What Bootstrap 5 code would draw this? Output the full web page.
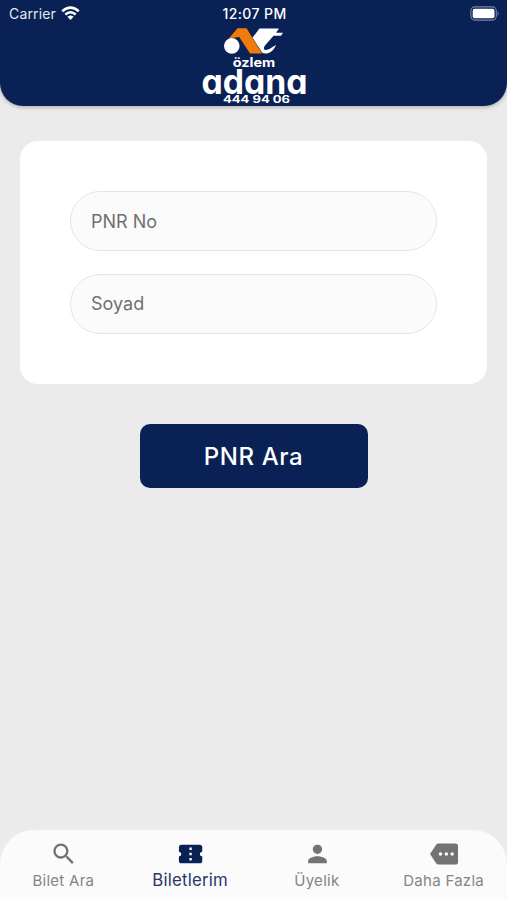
<!DOCTYPE html>
<html lang="tr">
<head>
<meta charset="utf-8">
<meta name="viewport" content="width=device-width, initial-scale=1">
<title>Biletlerim</title>
<link href="https://cdn.jsdelivr.net/npm/bootstrap@5.3.0/dist/css/bootstrap.min.css" rel="stylesheet">
<style>
body{font-family:Inter,"Liberation Sans",sans-serif;background:#ebebeb;overflow:hidden}
.app-head{height:106px;background:#092154;border-radius:0 0 23px 23px;box-shadow:0 1px 4px rgba(0,0,0,.3)}
.status-row{height:27px;padding:0 7px 0 9px;font-size:14px;line-height:27px}
.status-row>div{flex:1 1 0}
.carrier{letter-spacing:.15px;color:#e4e8f0}
.clock{font-size:14px;font-weight:500;letter-spacing:.4px}
.brand text{font-family:Inter,sans-serif;font-weight:700;font-feature-settings:"cv11";fill:#fff}
.search-panel{margin:34.5px 20px 0;padding:50.5px 50px 50px;border-radius:18px;height:243px}
.field{height:60px;padding:0 20px;font-size:18px;background:#fbfbfb;border:1px solid #e5e5e5}
.field::placeholder{color:#707070}
.field+.field{margin-top:22.5px}
.search-btn{width:228px;height:64px;margin-top:40.5px;padding:8px 0 6px;border-radius:10px;font-size:24px;font-weight:500;letter-spacing:.6px;background:#092154!important;color:#fff!important;border:0}
.tabs{height:70px;border-radius:34px 34px 0 0;background:#fbfbfb}
.tab{flex:1 1 0;padding-top:10px;color:#858585;font-size:15px;line-height:20px;letter-spacing:.28px;text-decoration:none;white-space:nowrap}
.tab svg{width:28px;height:28px;fill:#737373}
.tab span{margin-top:3px}
.tab.active{color:#233968;font-size:16.8px;letter-spacing:.22px}
.tab.active svg{fill:#092154}
.tab.active span{margin-top:2px}
</style>
<script src="https://cdn.jsdelivr.net/npm/bootstrap@5.3.0/dist/js/bootstrap.bundle.min.js"></script>
</head>
<body class="vh-100 d-flex flex-column">
<header class="app-head text-white flex-shrink-0 d-flex flex-column">
  <div class="status-row d-flex align-items-center">
    <div class="carrier d-flex align-items-center">Carrier
      <svg width="20" height="15" viewBox="-1 0 20 15" class="ms-1" aria-hidden="true"><g fill="none" stroke="#fff" stroke-width="2.5"><path d="M1.2 5.200Q9.500 -2 17.800 5.200"/><path d="M4.300 8.500Q9.500 4 14.700 8.500"/></g><path d="M9.500 14 6.400 10.800Q9.500 8 12.600 10.800Z" fill="#fff"/></svg>
    </div>
    <div class="clock text-center">12:07 PM</div>
    <div class="d-flex justify-content-end">
      <svg width="30" height="15" viewBox="0 0 30 15" aria-hidden="true"><rect x=".9" y=".9" width="25.4" height="13.2" rx="4" fill="none" stroke="#7886a3" stroke-width="1.1"/><rect x="2.7" y="2.7" width="21.8" height="9.6" rx="2" fill="#fff"/><path d="M27.6 5Q29.8 7.5 27.6 10Z" fill="#7886a3"/></svg>
    </div>
  </div>
  <svg class="brand align-self-center" width="108" height="79" viewBox="200 27 108 79" role="img" aria-label="özlem adana">
    <circle cx="231.8" cy="45.9" r="7.8" fill="#fff"/>
    <path d="M229 38.2 237.5 28.3H246.6L262 53.6H250L239.2 37Z" fill="#f07a0a"/>
    <path d="M252.500 37.600 259.500 28.600H279L276 32.700H283L281 35.800H273.500L265.200 45.300C262.500 49 264.500 51 268 49.600 270.700 48.500 272.700 46.300 276 44.900 274 50 270 53.700 265 53.600 262.500 53.500 261.500 52.200 260.500 50Z" fill="#fff"/>
    <text x="232.700" y="66.600" font-size="12.500" textLength="42.500" lengthAdjust="spacingAndGlyphs">özlem</text>
    <text x="201.400" y="94.300" font-size="33.500" textLength="106" lengthAdjust="spacingAndGlyphs">adana</text>
    <text x="223" y="103.300" font-size="10" textLength="67" lengthAdjust="spacingAndGlyphs">444 94 06</text>
  </svg>
</header>
<main class="flex-grow-1 d-flex flex-column">
  <form class="search-panel bg-white">
    <input class="form-control rounded-pill field" placeholder="PNR No" aria-label="PNR No">
    <input class="form-control rounded-pill field" placeholder="Soyad" aria-label="Soyad">
  </form>
  <button type="button" class="btn search-btn align-self-center">PNR Ara</button>
</main>
<nav class="tabs d-flex flex-shrink-0">
  <a href="#" class="tab d-flex flex-column align-items-center"><svg viewBox="-.7 0 24 24"><path d="M15.5 14h-.79l-.28-.27A6.47 6.47 0 0 0 16 9.5 6.5 6.5 0 1 0 9.5 16c1.61 0 3.09-.59 4.23-1.57l.27.28v.79l5 4.99L20.49 19zm-6 0a4.5 4.5 0 1 1 0-9 4.5 4.5 0 0 1 0 9z"/></svg><span>Bilet Ara</span></a>
  <a href="#" class="tab active d-flex flex-column align-items-center"><svg viewBox="-.5 0 24 24"><path d="M20 12c0-1.100.9-2 2-2V6c0-1.100-.9-2-2-2H4c-1.100 0-1.990.9-1.990 2v4c1.100 0 1.990.9 1.990 2s-.890 2-2 2v4c0 1.100.9 2 2 2h16c1.100 0 2-.9 2-2v-4c-1.100 0-2-.9-2-2zm-7 5.500h-2v-2h2v2zm0-4.500h-2v-2h2v2zm0-4.500h-2v-2h2v2z"/></svg><span>Biletlerim</span></a>
  <a href="#" class="tab d-flex flex-column align-items-center"><svg viewBox="-.4 0 24 24"><path d="M12 12c2.210 0 4-1.790 4-4s-1.790-4-4-4-4 1.790-4 4 1.790 4 4 4zm0 2c-2.670 0-8 1.340-8 4v2h16v-2c0-2.660-5.330-4-8-4z"/></svg><span>Üyelik</span></a>
  <a href="#" class="tab d-flex flex-column align-items-center"><svg viewBox="0 0 24 24"><path d="M22 3H7c-.69 0-1.230.35-1.590.88L0 12l5.410 8.110c.36.53.97.89 1.660.89H22c1.100 0 2-.9 2-2V5c0-1.100-.9-2-2-2zM9 13.500a1.500 1.500 0 1 1 0-3 1.500 1.500 0 0 1 0 3zm5 0a1.500 1.500 0 1 1 0-3 1.500 1.500 0 0 1 0 3zm5 0a1.500 1.500 0 1 1 0-3 1.500 1.500 0 0 1 0 3z"/></svg><span>Daha Fazla</span></a>
</nav>
</body>
</html>
